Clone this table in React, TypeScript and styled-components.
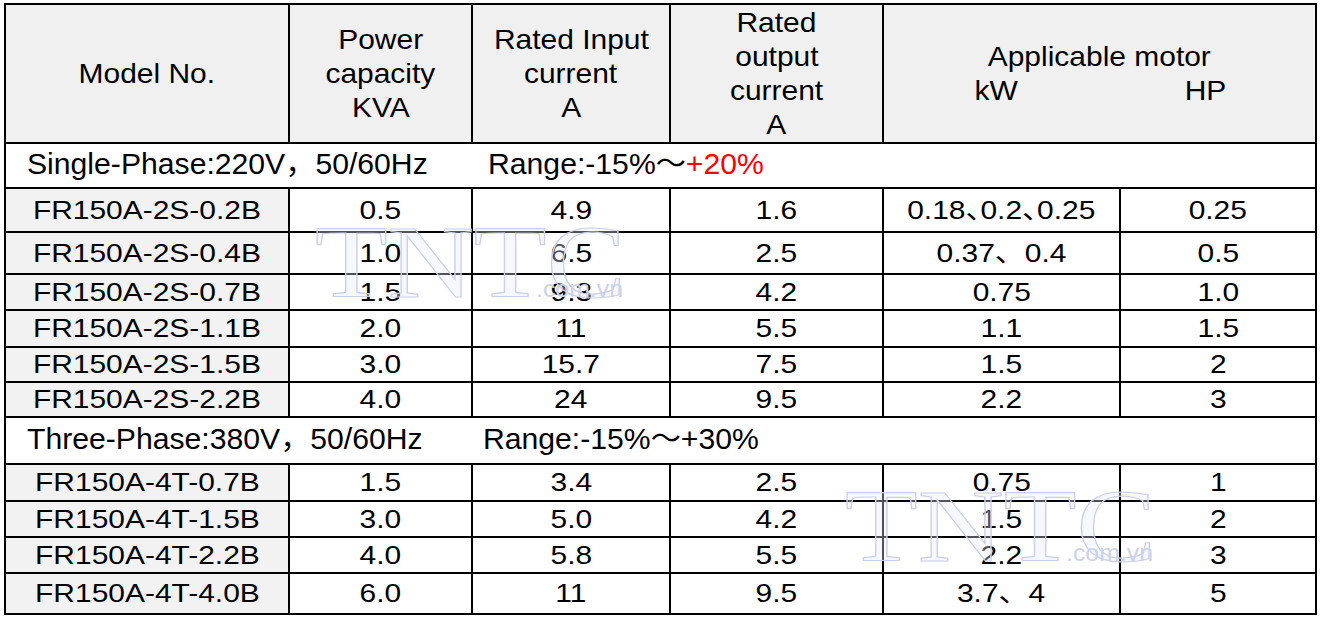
import styled, { createGlobalStyle } from 'styled-components';

const GlobalStyle = createGlobalStyle`
  html, body {
    margin: 0;
    padding: 0;
    background: #ffffff;
  }
  body {
    font-family: "Liberation Sans", Arial, "Noto Sans CJK SC", sans-serif;
    color: #000;
  }
`;

const Page = styled.div`
  padding: 3px 0 0 4px;
`;

const Sheet = styled.div`
  position: relative;
  display: grid;
  width: fit-content;
  grid-template-columns: 282px 181px 196px 211px 235px 194px;
  grid-template-rows: 137px 43px 42px 40px 34px 35px 33px 33px 45px 35px 34px 34px 39px;
  gap: 2px;
  background: #000;
  border: 2px solid #000;
`;

const HeadCell = styled.div<{ span?: number }>`
  grid-column: span ${({ span }) => span ?? 1};
  background: #f0f0f0;
  display: flex;
  flex-direction: column;
  align-items: center;
  justify-content: center;
  font-size: 28px;
  line-height: 34px;
`;

const HeadLine = styled.span`
  display: inline-block;
  white-space: nowrap;
  transform: scaleX(1.07);
`;

const UnitRow = styled.div`
  align-self: stretch;
  display: grid;
  grid-template-columns: 224px 194px;
  justify-items: center;
`;

const SectionCell = styled.div`
  grid-column: 1 / -1;
  background: #fff;
  display: flex;
  align-items: center;
  padding-left: 21px;
  font-size: 29px;
  line-height: 1;
`;

const SectionText = styled.span`
  display: inline-block;
  white-space: nowrap;
  transform: scaleX(1.04);
  transform-origin: left center;
  margin-top: -3px;
`;

const RangeText = styled.span`
  margin-left: 58px;
`;

const Plus = styled.span<{ $red?: boolean }>`
  color: ${({ $red }) => ($red ? '#ff0000' : '#000')};
`;

const Cell = styled.div<{ $shaded?: boolean }>`
  background: ${({ $shaded }) => ($shaded ? '#f2f2f2' : '#ffffff')};
  display: flex;
  align-items: center;
  justify-content: center;
  font-size: 26.5px;
  line-height: 1;
`;

const CellText = styled.span<{ $tight?: boolean }>`
  display: inline-block;
  white-space: nowrap;
  transform: scaleX(1.13);
  font-feature-settings: ${({ $tight }) => ($tight ? '"halt"' : 'normal')};
`;

// light "TNTC .com.vn" stamp laid over the table
const Mark = styled.svg<{ $x: number; $y: number }>`
  position: absolute;
  left: ${({ $x }) => $x}px;
  top: ${({ $y }) => $y}px;
  pointer-events: none;
  overflow: visible;
`;

type Row = [string, string, string, string, string, string];

const single: Row[] = [
  ['FR150A-2S-0.2B', '0.5', '4.9', '1.6', '0.18、0.2、0.25', '0.25'],
  ['FR150A-2S-0.4B', '1.0', '6.5', '2.5', '0.37、0.4', '0.5'],
  ['FR150A-2S-0.7B', '1.5', '9.3', '4.2', '0.75', '1.0'],
  ['FR150A-2S-1.1B', '2.0', '11', '5.5', '1.1', '1.5'],
  ['FR150A-2S-1.5B', '3.0', '15.7', '7.5', '1.5', '2'],
  ['FR150A-2S-2.2B', '4.0', '24', '9.5', '2.2', '3'],
];

const three: Row[] = [
  ['FR150A-4T-0.7B', '1.5', '3.4', '2.5', '0.75', '1'],
  ['FR150A-4T-1.5B', '3.0', '5.0', '4.2', '1.5', '2'],
  ['FR150A-4T-2.2B', '4.0', '5.8', '5.5', '2.2', '3'],
  ['FR150A-4T-4.0B', '6.0', '11', '9.5', '3.7、4', '5'],
];

const DataRows = ({ rows }: { rows: Row[] }) => (
  <>
    {rows.map((row) =>
      row.map((value, i) => (
        <Cell key={row[0] + i} $shaded={i === 0}>
          <CellText $tight={value === '0.18、0.2、0.25'}>{value}</CellText>
        </Cell>
      ))
    )}
  </>
);

const Watermark = ({ x, y }: { x: number; y: number }) => (
  <Mark $x={x} $y={y} width="330" height="100" viewBox="0 0 330 100">
    <text
      x="0"
      y="90"
      fontFamily="'Liberation Serif', serif"
      fontSize="104"
      textLength="311"
      lengthAdjust="spacingAndGlyphs"
      fill="rgba(232, 235, 249, 0.35)"
      stroke="#cbd0ea"
      strokeWidth="1.2"
    >
      TNTC
    </text>
    <text
      x="221"
      y="90"
      fontFamily="'Liberation Sans', sans-serif"
      fontSize="23"
      textLength="87"
      lengthAdjust="spacingAndGlyphs"
      fill="#cdd2eb"
    >
      .com.vn
    </text>
  </Mark>
);

export default function App() {
  return (
    <>
      <GlobalStyle />
      <Page>
        <Sheet>
          <HeadCell>
            <HeadLine>Model No.</HeadLine>
          </HeadCell>
          <HeadCell>
            <HeadLine>Power</HeadLine>
            <HeadLine>capacity</HeadLine>
            <HeadLine>KVA</HeadLine>
          </HeadCell>
          <HeadCell>
            <HeadLine>Rated Input</HeadLine>
            <HeadLine>current</HeadLine>
            <HeadLine>A</HeadLine>
          </HeadCell>
          <HeadCell>
            <HeadLine>Rated</HeadLine>
            <HeadLine>output</HeadLine>
            <HeadLine>current</HeadLine>
            <HeadLine>A</HeadLine>
          </HeadCell>
          <HeadCell span={2}>
            <HeadLine>Applicable motor</HeadLine>
            <UnitRow>
              <HeadLine>kW</HeadLine>
              <HeadLine>HP</HeadLine>
            </UnitRow>
          </HeadCell>

          <SectionCell>
            <SectionText>
              Single-Phase:220V，50/60Hz
              <RangeText>
                Range:-15%～<Plus $red>+20%</Plus>
              </RangeText>
            </SectionText>
          </SectionCell>
          <DataRows rows={single} />

          <SectionCell>
            <SectionText>
              Three-Phase:380V，50/60Hz
              <RangeText>
                Range:-15%～<Plus>+30%</Plus>
              </RangeText>
            </SectionText>
          </SectionCell>
          <DataRows rows={three} />

          <Watermark x={309} y={202} />
          <Watermark x={839} y={466} />
        </Sheet>
      </Page>
    </>
  );
}
